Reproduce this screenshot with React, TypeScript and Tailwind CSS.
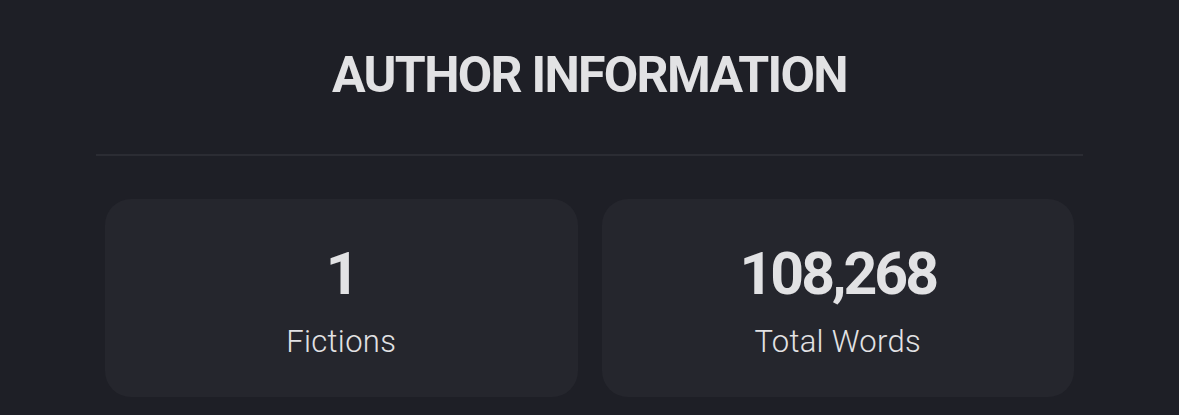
import React from 'react';

const stats = [
  { value: '1', label: 'Fictions' },
  { value: '108,268', label: 'Total Words' },
];

export default function App() {
  return (
    <div
      className="w-full h-[415px] bg-[#1e1f26] text-[#e2e2e4] overflow-hidden"
      style={{ fontFamily: 'Roboto, "Liberation Sans", sans-serif' }}
    >
      <div className="px-[96px] pt-[45px]">
        <h2 className="text-center text-[50px] leading-[60px] font-bold tracking-[-1.7px]">
          AUTHOR INFORMATION
        </h2>
        <div className="mt-[49px] h-[2px] bg-[#2b2c33]" />
        <div className="mt-[43px] px-[9px] grid grid-cols-2 gap-[24px]">
          {stats.map((s) => (
            <div
              key={s.label}
              className="h-[198px] rounded-[26px] bg-[#25262d] flex flex-col items-center pt-[43px]"
            >
              <div className="text-[59px] leading-[64px] font-bold tracking-[-3px]">{s.value}</div>
              <div className="mt-[18px] text-[31px] leading-[36px] font-light tracking-[0.3px]">
                {s.label}
              </div>
            </div>
          ))}
        </div>
      </div>
    </div>
  );
}
